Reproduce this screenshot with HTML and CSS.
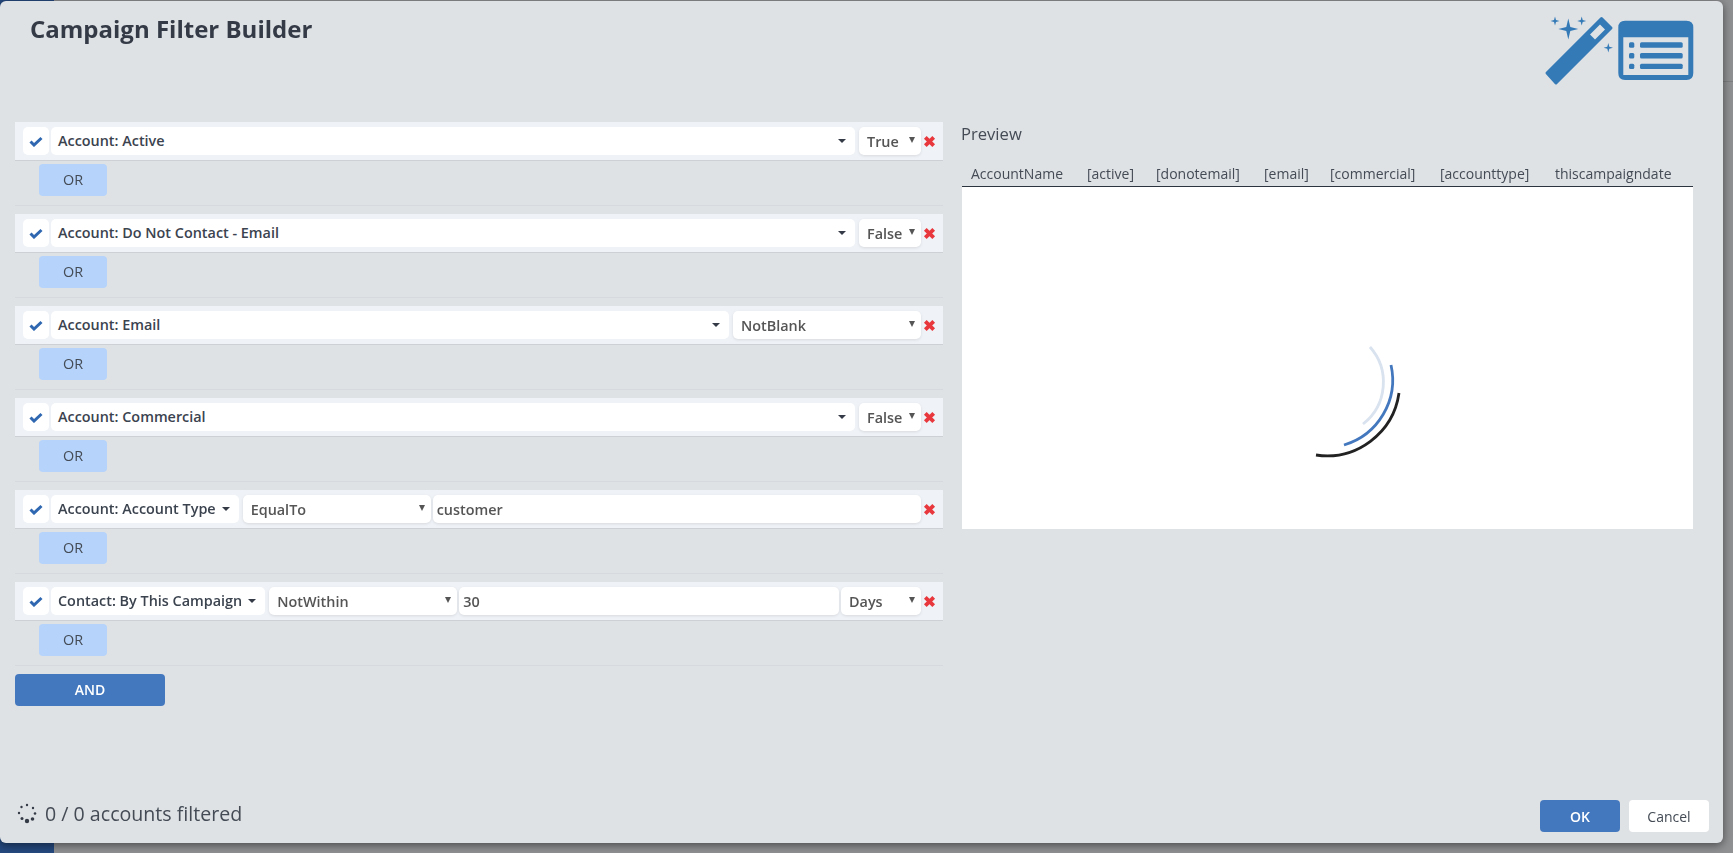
FILE: index.html
```html
<!DOCTYPE html>
<html lang="en">
<head>
    <meta charset="UTF-8">
    <title>Campaign Filter Builder</title>
    <link rel="stylesheet" href="styles.css">
</head>
<body>
    <div class="backdrop">
        <div class="side-strip"></div>
        <div class="top-line"></div>
    </div>

    <div class="modal">
        <div class="modal-header">
            <h2>Campaign Filter Builder</h2>
            <svg class="logo" width="148" height="72" viewBox="0 0 148 72">
                <g fill="#337ab7">
                    <!-- wand -->
                    <path class="wand" d="M2 63 L56.500 8.500 L66 18 L11 73 Z"/>
                    <path class="wand-slot" d="M45 24.500 L55 14.500 L60 19.500 L50 29.500 Z"/>
                    <!-- sparkles -->
                    <path d="M23.300 8.500 L25.300 17 L33.300 19 L25.300 21 L23.300 29.500 L21.300 21 L13.300 19 L21.300 17 Z"/>
                    <path d="M10 6.500 L11 10 L14.500 11 L11 12 L10 15.500 L9 12 L5.500 11 L9 10 Z"/>
                    <path d="M36.700 6.500 L37.700 10 L41.200 11 L37.700 12 L36.700 15.500 L35.700 12 L32.200 11 L35.700 10 Z"/>
                    <path d="M63.300 33 L64.300 36.700 L68 37.700 L64.300 38.700 L63.300 42.500 L62.300 38.700 L58.600 37.700 L62.300 36.700 Z"/>
                    <!-- list window -->
                    <path fill-rule="evenodd" d="M80 10.700 H141.500 Q148.300 10.700 148.300 17.500 V63 Q148.300 70 141.500 70 H80 Q73.300 70 73.300 63 V17.500 Q73.300 10.700 80 10.700 Z M78.300 27.300 V65 H143.300 V27.300 Z"/>
                    <rect x="84" y="32.300" width="5.300" height="5.400" rx="1.500"/>
                    <rect x="95" y="32.300" width="42.700" height="5.400" rx="1.500"/>
                    <rect x="84" y="43" width="5.300" height="5.400" rx="1.500"/>
                    <rect x="95" y="43" width="42.700" height="5.400" rx="1.500"/>
                    <rect x="84" y="53.700" width="5.300" height="5.400" rx="1.500"/>
                    <rect x="95" y="53.700" width="42.700" height="5.400" rx="1.500"/>
                </g>
            </svg>
        </div>

        <div class="modal-body">
            <div class="filters">
                <div class="filter-group">
                    <div class="filter-row">
                        <span class="check"><svg width="14" height="11" viewBox="0 0 14 11"><path d="M1.500 5.500 L5 9 L12.500 2"/></svg></span>
                        <div class="field grow">Account: Active<i class="caret"></i></div>
                        <div class="select narrow">True<i class="tri"></i></div>
                        <span class="remove"><svg width="13" height="13" viewBox="0 0 13 13"><path d="M2.300 2.300 L10.700 10.700 M10.700 2.300 L2.300 10.700"/></svg></span>
                    </div>
                    <button class="btn-or">OR</button>
                </div>

                <div class="filter-group">
                    <div class="filter-row">
                        <span class="check"><svg width="14" height="11" viewBox="0 0 14 11"><path d="M1.500 5.500 L5 9 L12.500 2"/></svg></span>
                        <div class="field grow">Account: Do Not Contact - Email<i class="caret"></i></div>
                        <div class="select narrow">False<i class="tri"></i></div>
                        <span class="remove"><svg width="13" height="13" viewBox="0 0 13 13"><path d="M2.300 2.300 L10.700 10.700 M10.700 2.300 L2.300 10.700"/></svg></span>
                    </div>
                    <button class="btn-or">OR</button>
                </div>

                <div class="filter-group">
                    <div class="filter-row">
                        <span class="check"><svg width="14" height="11" viewBox="0 0 14 11"><path d="M1.500 5.500 L5 9 L12.500 2"/></svg></span>
                        <div class="field grow">Account: Email<i class="caret"></i></div>
                        <div class="select medium">NotBlank<i class="tri"></i></div>
                        <span class="remove"><svg width="13" height="13" viewBox="0 0 13 13"><path d="M2.300 2.300 L10.700 10.700 M10.700 2.300 L2.300 10.700"/></svg></span>
                    </div>
                    <button class="btn-or">OR</button>
                </div>

                <div class="filter-group">
                    <div class="filter-row">
                        <span class="check"><svg width="14" height="11" viewBox="0 0 14 11"><path d="M1.500 5.500 L5 9 L12.500 2"/></svg></span>
                        <div class="field grow">Account: Commercial<i class="caret"></i></div>
                        <div class="select narrow">False<i class="tri"></i></div>
                        <span class="remove"><svg width="13" height="13" viewBox="0 0 13 13"><path d="M2.300 2.300 L10.700 10.700 M10.700 2.300 L2.300 10.700"/></svg></span>
                    </div>
                    <button class="btn-or">OR</button>
                </div>

                <div class="filter-group">
                    <div class="filter-row">
                        <span class="check"><svg width="14" height="11" viewBox="0 0 14 11"><path d="M1.500 5.500 L5 9 L12.500 2"/></svg></span>
                        <div class="field">Account: Account Type<i class="caret"></i></div>
                        <div class="select medium">EqualTo<i class="tri"></i></div>
                        <div class="input grow">customer</div>
                        <span class="remove"><svg width="13" height="13" viewBox="0 0 13 13"><path d="M2.300 2.300 L10.700 10.700 M10.700 2.300 L2.300 10.700"/></svg></span>
                    </div>
                    <button class="btn-or">OR</button>
                </div>

                <div class="filter-group">
                    <div class="filter-row">
                        <span class="check"><svg width="14" height="11" viewBox="0 0 14 11"><path d="M1.500 5.500 L5 9 L12.500 2"/></svg></span>
                        <div class="field">Contact: By This Campaign<i class="caret"></i></div>
                        <div class="select medium">NotWithin<i class="tri"></i></div>
                        <div class="input grow">30</div>
                        <div class="select unit">Days<i class="tri"></i></div>
                        <span class="remove"><svg width="13" height="13" viewBox="0 0 13 13"><path d="M2.300 2.300 L10.700 10.700 M10.700 2.300 L2.300 10.700"/></svg></span>
                    </div>
                    <button class="btn-or">OR</button>
                </div>

                <button class="btn-and">AND</button>
            </div>

            <div class="preview">
                <div class="preview-title">Preview</div>
                <div class="preview-head">
                    <span>AccountName</span>
                    <span>[active]</span>
                    <span>[donotemail]</span>
                    <span>[email]</span>
                    <span>[commercial]</span>
                    <span>[accounttype]</span>
                    <span>thiscampaigndate</span>
                </div>
                <div class="preview-table">
                    <svg width="100" height="130" viewBox="0 0 100 130">
                        <path d="M60 7 A53 53 0 0 1 53 84" stroke="#d9e2ef"/>
                        <path d="M81 25 A68 68 0 0 1 34 105" stroke="#4478be"/>
                        <path d="M89 53 A73 73 0 0 1 6 115" stroke="#222"/>
                    </svg>
                </div>
            </div>
        </div>

        <div class="modal-footer">
            <div class="status">
                <svg width="22" height="22" viewBox="0 0 22 22">
                    <g fill="#343b47">
                        <circle cx="11" cy="19" r="2.200"/>
                        <circle cx="16.500" cy="17" r="1.800"/>
                        <circle cx="19" cy="11.500" r="1.300"/>
                        <circle cx="17" cy="6" r="1.200"/>
                        <circle cx="11" cy="3" r="1.200"/>
                        <circle cx="5.500" cy="5" r="1.200"/>
                        <circle cx="3" cy="11" r="1.200"/>
                        <circle cx="6" cy="16.500" r="1.500"/>
                    </g>
                </svg>
                <span>0 / 0 accounts filtered</span>
            </div>
            <div class="actions">
                <button class="btn-ok">OK</button>
                <button class="btn-cancel">Cancel</button>
            </div>
        </div>
    </div>
</body>
</html>
```

FILE: styles.css
```css
* {
    box-sizing: border-box;
}
html, body {
    height: 100%;
}
body {
    margin: 0;
    overflow: hidden;
    font-family: "Open Sans", Arial, sans-serif;
    color: #343b47;
    background: #8f9193;
}
.backdrop {
    position: fixed;
    inset: 0;
}
.side-strip {
    position: absolute;
    left: 0;
    top: 0;
    bottom: 0;
    width: 54px;
    background: #25497f;
}
.top-line {
    position: absolute;
    right: 0;
    top: 81px;
    width: 10px;
    height: 1px;
    background: #7d7f81;
}
.modal {
    position: fixed;
    left: 0;
    top: 1px;
    width: 1723px;
    height: 842px;
    display: flex;
    flex-direction: column;
    background: #dfe2e5;
    border-radius: 6px;
    box-shadow: 0 2px 10px rgba(0,0,0,0.5);
}
.modal-header {
    height: 121px;
    display: flex;
    justify-content: space-between;
    align-items: flex-start;
    padding: 9px 30px 0 30px;
    flex: none;
}
.modal-header h2 {
    margin: 5px 0 0;
    font-size: 24px;
    line-height: 28px;
    font-weight: 700;
}
.logo {
    overflow: visible;
}
.wand {
    stroke: #337ab7;
    stroke-width: 3;
    stroke-linejoin: round;
}
.wand-slot {
    fill: #dfe2e5;
}
.modal-body {
    flex: 1;
    display: flex;
    padding: 0 30px 0 15px;
    min-height: 0;
}
.filters {
    width: 928px;
    flex: none;
}
.filter-group {
    height: 92px;
    position: relative;
}
.filter-group::after {
    content: "";
    position: absolute;
    left: 0;
    right: 0;
    bottom: 8px;
    height: 1px;
    background: #d6dade;
}
.filter-row {
    height: 39px;
    display: flex;
    align-items: center;
    gap: 2px;
    padding: 0 6px 0 8px;
    background: #eff2f6;
    border-bottom: 1px solid #cdd1d6;
}
.check, .field, .select, .input {
    height: 28px;
    background: white;
    border-radius: 5px;
    font-size: 14.4px;
    line-height: 28px;
    white-space: nowrap;
}
.check {
    width: 26px;
    flex: none;
    display: flex;
    align-items: center;
    justify-content: center;
}
.check svg {
    fill: none;
    stroke: #2f68b1;
    stroke-width: 3;
}
.field {
    padding: 0 6px 0 7px;
    font-weight: 600;
    color: #3b434f;
    display: flex;
    align-items: center;
    justify-content: space-between;
    flex: none;
}
.caret {
    width: 0;
    height: 0;
    margin-left: 6px;
    margin-right: 3px;
    border-left: 4px solid transparent;
    border-right: 4px solid transparent;
    border-top: 4px solid #343b47;
}
.select {
    position: relative;
    margin-left: 2px;
    padding-left: 8px;
    font-weight: 600;
    line-height: 29px;
    color: #555;
    box-shadow: 0 1px 3px rgba(0,0,0,0.1);
    flex: none;
}
.tri {
    position: absolute;
    right: 6px;
    top: 10px;
    width: 0;
    height: 0;
    border-left: 3px solid transparent;
    border-right: 3px solid transparent;
    border-top: 6px solid #555;
}
.narrow {
    width: 62px;
}
.medium {
    width: 188px;
}
.unit {
    width: 80px;
    margin-left: 0;
}
.input {
    padding-left: 4px;
    font-weight: 600;
    line-height: 29px;
    color: #555;
    box-shadow: 0 1px 3px rgba(0,0,0,0.1);
}
.grow {
    flex: 1;
    min-width: 0;
}
.remove {
    width: 14px;
    flex: none;
    display: flex;
}
.remove svg {
    fill: none;
    flex: none;
    stroke: #e8383d;
    stroke-width: 3.8;
}
.btn-or {
    display: block;
    width: 68px;
    height: 32px;
    margin: 3px 0 0 24px;
    padding: 0 0 2px;
    border: none;
    border-radius: 4px;
    background: #b5d3fb;
    color: #444b55;
    font-family: inherit;
    font-size: 14.4px;
}
.btn-and, .btn-ok {
    border: none;
    border-radius: 4px;
    background: #4478be;
    color: white;
    font-family: inherit;
    font-size: 14px;
    font-weight: 600;
}
.btn-and {
    width: 150px;
    height: 32px;
    display: block;
    padding: 0 0 2px;
}
.preview {
    width: 731px;
    margin-left: 19px;
    flex: none;
}
.preview-title {
    margin-left: -1px;
    padding-top: 1px;
    font-size: 16.6px;
    line-height: 22px;
    color: #444b55;
}
.preview-head {
    display: grid;
    grid-template-columns: 116px 69px 108px 66px 110px 115px auto;
    height: 26px;
    margin-top: 16px;
    padding-left: 9px;
    font-size: 14px;
    line-height: 26px;
    color: #444b55;
    border-bottom: 1px solid #2c3440;
}
.preview-table {
    height: 342px;
    background: white;
    position: relative;
}
.preview-table svg {
    position: absolute;
    left: 348px;
    top: 153px;
    fill: none;
    stroke-width: 2.8;
    overflow: visible;
}
.modal-footer {
    height: 65px;
    flex: none;
    display: flex;
    justify-content: space-between;
    align-items: flex-start;
    padding: 22px 14px 0 16px;
}
.status {
    display: flex;
    align-items: center;
    gap: 7px;
    height: 26px;
    font-size: 19.6px;
    color: #444b55;
}
.actions {
    display: flex;
    gap: 9px;
}
.btn-ok, .btn-cancel {
    width: 80px;
    height: 32px;
    font-size: 14px;
}
.btn-cancel {
    border: none;
    border-radius: 4px;
    background: white;
    color: #444b55;
    font-family: inherit;
}
```
